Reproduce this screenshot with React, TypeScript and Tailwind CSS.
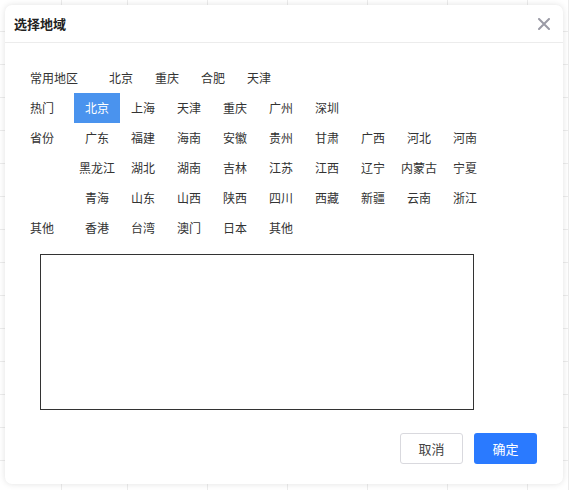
import React from "react";

type Row = { label: string; items: string[] };

const rows: Row[] = [
  { label: "常用地区", items: ["北京", "重庆", "合肥", "天津"] },
  { label: "热门", items: ["北京", "上海", "天津", "重庆", "广州", "深圳"] },
  {
    label: "省份",
    items: [
      "广东", "福建", "海南", "安徽", "贵州", "甘肃", "广西", "河北", "河南",
      "黑龙江", "湖北", "湖南", "吉林", "江苏", "江西", "辽宁", "内蒙古", "宁夏",
      "青海", "山东", "山西", "陕西", "四川", "西藏", "新疆", "云南", "浙江",
    ],
  },
  { label: "其他", items: ["香港", "台湾", "澳门", "日本", "其他"] },
];

const font = { fontFamily: '"Noto Sans CJK SC", "Liberation Sans", sans-serif' };

const BackgroundTable = () => {
  const cols = 8;
  const cells = Array.from({ length: 15 * cols });
  return (
    <div className="grid grid-cols-[62px_66px_80px_80px_80px_80px_80px_1fr] auto-rows-[33px]">
      {cells.map((_, i) => (
        <div key={i} className="border-r border-b border-[#ececec] h-[33px]" />
      ))}
    </div>
  );
};

export default function App() {
  const selected = "热门-北京";

  return (
    <div className="relative w-[569px] h-[490px] overflow-hidden bg-white" style={font}>
      <div className="-mt-[1px]">
        <BackgroundTable />
      </div>

      <div className="absolute left-[5px] top-[5px] w-[558px] h-[479px] bg-white rounded-[7px] shadow-[0_0_6px_rgba(0,0,0,0.12)] flex flex-col">
        <div className="h-[38px] border-b border-[#ececec] flex items-center justify-between pl-[9px] pr-[13px] shrink-0">
          <span className="text-[13px] font-bold text-[#222] leading-none">选择地域</span>
          <svg width="12" height="12" viewBox="0 0 12 12" className="mt-[1px]">
            <path d="M1 1L11 11M11 1L1 11" stroke="#9b9ba6" strokeWidth="2" strokeLinecap="round" />
          </svg>
        </div>

        <div className="pt-[20px] pl-[25px] flex flex-col">
          {rows.map((row) => (
            <div key={row.label} className="flex items-start">
              <span className="text-[12px] leading-[30px] text-[#333] mr-[20px] whitespace-nowrap">
                {row.label}
              </span>
              <div className="flex flex-wrap w-[414px]">
                {row.items.map((item) => {
                  const active = `${row.label}-${item}` === selected;
                  return (
                    <span
                      key={item}
                      className={`w-[46px] h-[30px] leading-[30px] text-center text-[12px] whitespace-nowrap ${
                        active ? "bg-[#4a93ee] text-white" : "text-[#333]"
                      }`}
                    >
                      {item}
                    </span>
                  );
                })}
              </div>
            </div>
          ))}

          <div className="mt-[11px] ml-[10px] w-[434px] h-[156px] border border-[#333]" />
        </div>

        <div className="mt-auto flex justify-end gap-[11px] pr-[26px] pb-[20px]">
          <button
            type="button"
            className="w-[63px] h-[31px] rounded-[3px] border border-[#d9d9de] bg-white text-[13px] text-[#444]"
          >
            取消
          </button>
          <button
            type="button"
            className="w-[63px] h-[31px] rounded-[3px] bg-[#2a7aff] text-[13px] text-white"
          >
            确定
          </button>
        </div>
      </div>
    </div>
  );
}
